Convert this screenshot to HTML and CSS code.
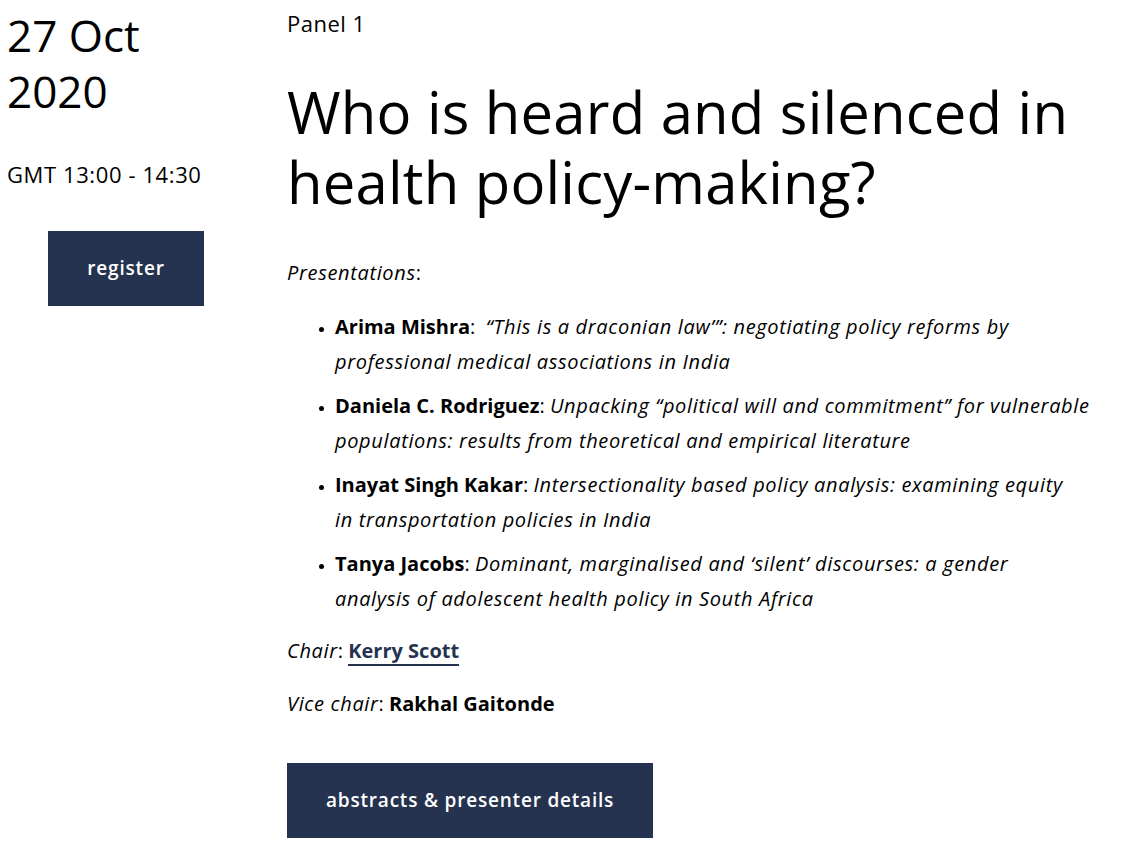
FILE: index.html
```html
<!DOCTYPE html>
<html lang="en">

<head>
    <meta charset="UTF-8">
    <meta name="viewport" content="width=device-width, initial-scale=1.0">
    <title>Panel 1 - Who is heard and silenced in health policy-making?</title>
    <link rel="stylesheet" href="styles.css">
</head>

<body>
    <div class="event">
        <aside class="event-when">
            <h2 class="event-date">27 Oct<br>2020</h2>
            <p class="event-time">GMT 13:00 - 14:30</p>
            <div class="register-wrap">
                <a class="button" href="#">register</a>
            </div>
        </aside>

        <main class="event-body">
            <p class="panel-label">Panel 1</p>
            <h1 class="panel-title">Who is heard and silenced in health policy-making?</h1>

            <p class="intro"><em>Presentations</em>:</p>
            <ul class="talks">
                <li><strong>Arima Mishra</strong>:&nbsp; <em>“This is a draconian law’”: negotiating policy reforms by professional medical associations in India</em></li>
                <li><strong>Daniela C. Rodriguez</strong>: <em>Unpacking “political will and commitment” for vulnerable populations: results from theoretical and empirical literature</em></li>
                <li><strong>Inayat Singh Kakar</strong>: <em>Intersectionality based policy analysis: examining equity in&nbsp;transportation policies in India</em></li>
                <li><strong>Tanya Jacobs</strong>: <em>Dominant, marginalised and ‘silent’ discourses: a gender analysis&nbsp;of adolescent health policy in South Africa</em></li>
            </ul>

            <p><em>Chair</em>: <a class="person-link" href="#">Kerry Scott</a></p>
            <p><em>Vice chair</em>: <strong>Rakhal Gaitonde</strong></p>

            <div class="details-wrap">
                <a class="button" href="#">abstracts &amp; presenter details</a>
            </div>
        </main>
    </div>
</body>

</html>
```

FILE: styles.css
```css
* {
    margin: 0;
    padding: 0;
    box-sizing: border-box;
}

body {
    font-family: "Open Sans", "Liberation Sans", sans-serif;
    color: #000;
    background: #fff;
}

.event {
    display: grid;
    grid-template-columns: 238px 808px;
    column-gap: 42px;
    padding: 7px 0 0 7px;
}

/* left column: date, time, register */
.event-date {
    font-size: 44px;
    font-weight: 400;
    line-height: 56px;
}

.event-time {
    margin-top: 39px;
    font-size: 22px;
    letter-spacing: 0.6px;
    line-height: 32px;
}

.register-wrap {
    margin-top: 41px;
    display: flex;
    justify-content: center;
}

.button {
    display: inline-block;
    background-color: #263350;
    color: #fff;
    text-decoration: none;
    font-size: 19px;
    font-weight: 600;
    letter-spacing: 0.8px;
    line-height: 27px;
    padding: 24px 39px;
}

/* right column: panel details */
.event-body p {
    font-size: 20px;
    line-height: 35px;
    margin-bottom: 18px;
}

.event-body .panel-label {
    font-size: 22px;
    letter-spacing: 0.5px;
    line-height: 32px;
    margin-bottom: 38px;
}

.panel-title {
    font-size: 58px;
    font-weight: 400;
    letter-spacing: 0.2px;
    line-height: 70px;
    margin-bottom: 38px;
}

.event-body .intro {
    margin-bottom: 19px;
}

.talks {
    padding-left: 48px;
    margin-bottom: 17px;
}

.talks li {
    font-size: 20px;
    line-height: 35px;
    margin-bottom: 9px;
}

.talks li::marker {
    font-size: 13px;
}

.talks li:last-child {
    margin-bottom: 0;
}

em {
    letter-spacing: 0.65px;
}

strong {
    font-weight: 700;
}

.person-link {
    color: #263350;
    font-weight: 700;
    text-decoration: none;
    border-bottom: 2px solid #263350;
}

.details-wrap {
    margin-top: 42px;
}
```
